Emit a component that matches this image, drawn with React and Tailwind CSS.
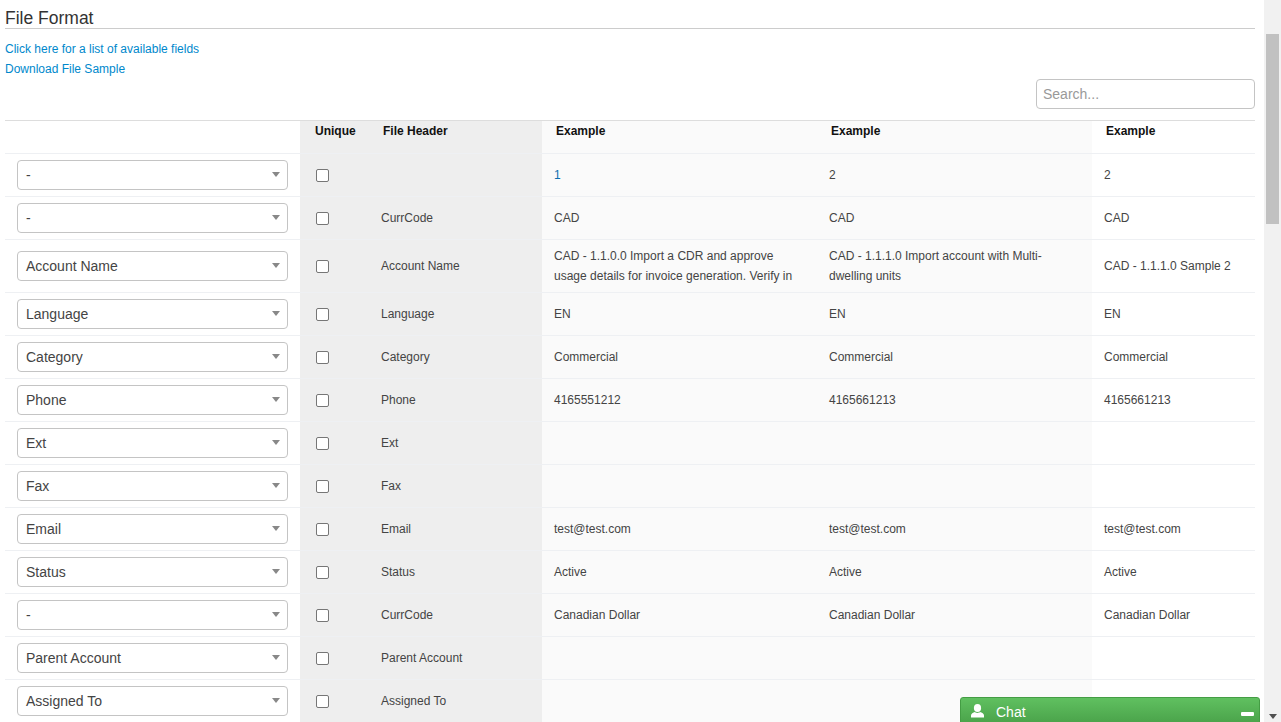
const rows = [
  { field: "-", header: "", a: "1", b: "2", c: "2", firstBlue: true },
  { field: "-", header: "CurrCode", a: "CAD", b: "CAD", c: "CAD" },
  {
    field: "Account Name",
    header: "Account Name",
    a: "CAD - 1.1.0.0 Import a CDR and approve usage details for invoice generation. Verify in",
    b: "CAD - 1.1.1.0 Import account with Multi-dwelling units",
    c: "CAD - 1.1.1.0 Sample 2",
    tall: true,
  },
  { field: "Language", header: "Language", a: "EN", b: "EN", c: "EN" },
  { field: "Category", header: "Category", a: "Commercial", b: "Commercial", c: "Commercial" },
  { field: "Phone", header: "Phone", a: "4165551212", b: "4165661213", c: "4165661213" },
  { field: "Ext", header: "Ext", a: "", b: "", c: "" },
  { field: "Fax", header: "Fax", a: "", b: "", c: "" },
  { field: "Email", header: "Email", a: "test@test.com", b: "test@test.com", c: "test@test.com" },
  { field: "Status", header: "Status", a: "Active", b: "Active", c: "Active" },
  { field: "-", header: "CurrCode", a: "Canadian Dollar", b: "Canadian Dollar", c: "Canadian Dollar" },
  { field: "Parent Account", header: "Parent Account", a: "", b: "", c: "" },
  { field: "Assigned To", header: "Assigned To", a: "", b: "", c: "" },
];

function FieldSelect({ value }) {
  return (
    <div className="w-[271px] h-[30px] pl-2 pr-[7px] flex items-center justify-between bg-white border border-[#c4c4c4] rounded text-sm text-[#444]">
      <span>{value}</span>
      <span className="border-x-[4px] border-t-[5px] border-x-transparent border-t-[#888] -mt-px" />
    </div>
  );
}

function Row({ row }) {
  return (
    <div className={`flex border-b border-[#eef0f3] text-xs text-[#444] ${row.tall ? "h-[53px]" : "h-[43px]"}`}>
      <div className="w-[295px] pl-3 flex items-center shrink-0">
        <FieldSelect value={row.field} />
      </div>
      <div className="w-[242px] shrink-0 flex items-center bg-[#eeeeee]">
        <span className="ml-4 w-[13px] h-[13px] border border-[#767676] rounded-[2px] bg-white shrink-0" />
        <span className="ml-[52px] -mt-px">{row.header}</span>
      </div>
      <div className={`w-[275px] shrink-0 flex items-center pl-3 pr-5 bg-[#fafafa] leading-5 ${row.firstBlue ? "text-[#0c6fb0]" : ""}`}>
        <span className="-mt-px">{row.a}</span>
      </div>
      <div className="w-[275px] shrink-0 flex items-center pl-3 pr-5 bg-[#fafafa] leading-5">
        <span className="-mt-px">{row.b}</span>
      </div>
      <div className="flex-1 flex items-center pl-3 leading-5">
        <span className="-mt-px">{row.c}</span>
      </div>
    </div>
  );
}

export default function App() {
  return (
    <div className="relative flex h-screen overflow-hidden bg-white font-['Liberation_Sans',Arial,sans-serif]">
      <main className="w-[1255px] pl-[5px] shrink-0">
        <h2 className="h-[29px] pt-2 border-b border-[#cccccc] text-[17.5px] leading-5 text-[#333]">File Format</h2>
        <div className="mt-[13px] flex flex-col gap-1.5 text-xs leading-[14px] text-[#0088cc]">
          <a href="#">Click here for a list of available fields</a>
          <a href="#">Download File Sample</a>
        </div>
        <div className="mt-[3px] flex justify-end">
          <input
            placeholder="Search..."
            className="w-[219px] h-[30px] px-1.5 border border-[#c4c4c4] rounded text-sm text-[#444] placeholder:text-[#999] outline-none"
          />
        </div>

        <div className="mt-[11px] border-t border-[#dddddd]">
          <div className="flex h-[33px] border-b border-[#eef0f3] text-xs font-bold text-[#111]">
            <div className="w-[295px] shrink-0" />
            <div className="w-[242px] shrink-0 pt-[2px] bg-[#eeeeee] flex">
              <span className="ml-[15px] w-[68px]">Unique</span>
              <span>File Header</span>
            </div>
            <div className="w-[275px] shrink-0 pl-3.5 pt-[2px] bg-[#fafafa]">Example</div>
            <div className="w-[275px] shrink-0 pl-3.5 pt-[2px] bg-[#fafafa]">Example</div>
            <div className="flex-1 pl-3.5 pt-[2px]">Example</div>
          </div>
          {rows.map((row, i) => (
            <Row key={i} row={row} />
          ))}
        </div>
      </main>

      <div className="ml-[9px] w-[17px] bg-[#f1f1f1] flex flex-col items-center">
        <div className="mt-[34px] w-[13px] h-[190px] bg-[#c1c1c1]" />
        <span className="mt-auto mb-[3px] border-x-[4px] border-t-[5px] border-x-transparent border-t-[#505050]" />
      </div>

      <div className="absolute left-[960px] top-[697px] w-[300px] h-[30px] flex items-start pt-[5px] pl-[10px] pr-[5px] rounded-t-[3px] border border-[#449d44] bg-gradient-to-b from-[#60c060] to-[#48a048] text-white text-sm">
        <svg width="13" height="14" viewBox="0 0 13 14" fill="currentColor" className="mt-[1px]">
          <ellipse cx="6.5" cy="4" rx="3.6" ry="4" />
          <path d="M0 13.5V11.5C0 9.5 2 8.8 4 8C5 9.2 8 9.2 9 8C11 8.8 13 9.5 13 11.5V13.5Z" />
        </svg>
        <span className="ml-3 flex-1 leading-5 -mt-px">Chat</span>
        <span className="mt-[9px] w-[13px] h-[4px] rounded-[1px] bg-white" />
      </div>
    </div>
  );
}
